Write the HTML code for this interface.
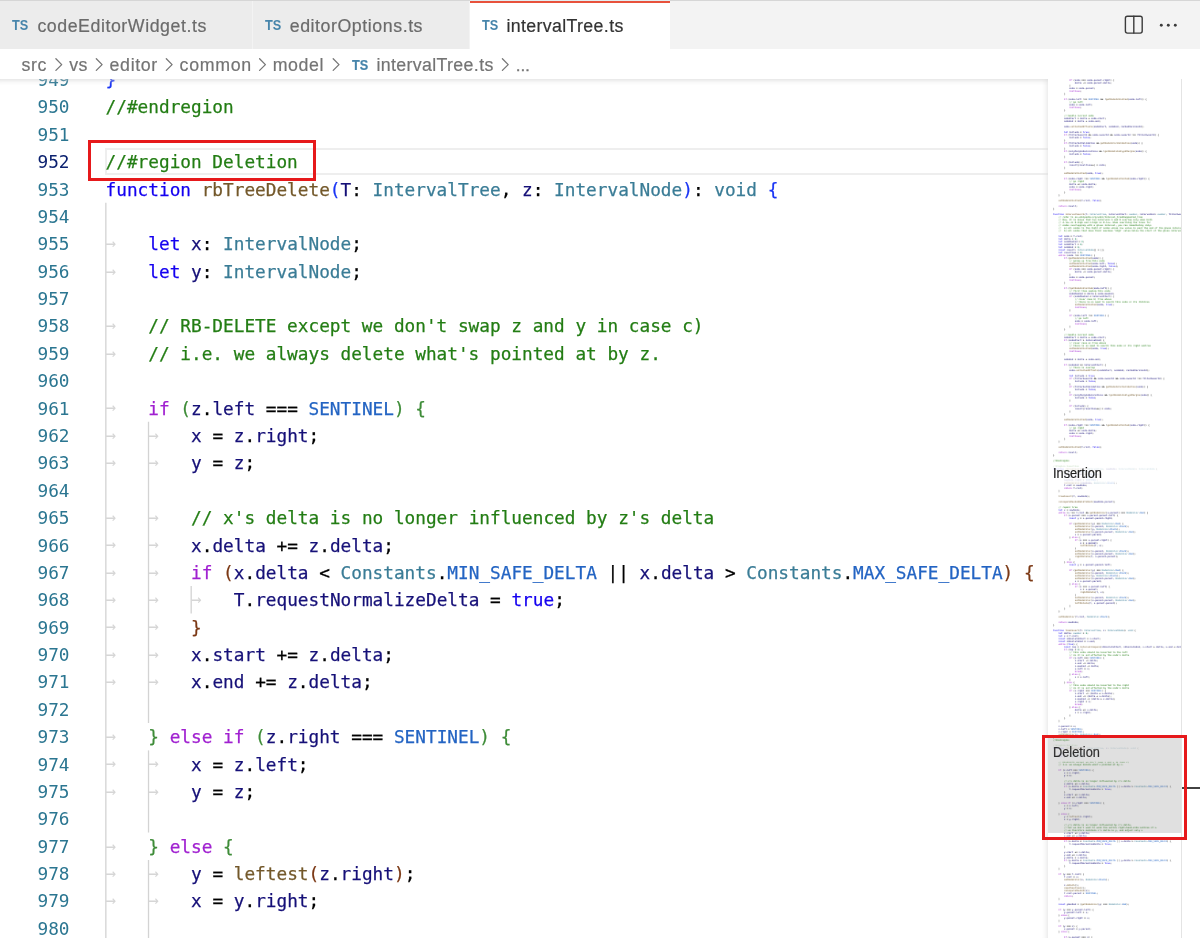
<!DOCTYPE html>
<html lang="en"><head><meta charset="utf-8"><title>intervalTree.ts</title>
<style>
html,body{margin:0;padding:0;background:#fff}
body{width:1200px;height:938px;overflow:hidden;position:relative;font-family:"Liberation Sans", "DejaVu Sans", sans-serif;}
#root{position:absolute;left:0;top:0;width:1200px;height:938px;overflow:hidden;will-change:transform}
i{font-style:normal}
.c{color:#237d14}.k{color:#1400f0}.x{color:#a020d0}.t{color:#3a7c96}.n{color:#2364c3}
.f{color:#73582a}.v{color:#161078}.d{color:#098658}.s{color:#a31515}
.b1{color:#1a35f5}.b2{color:#3e8c38}.b3{color:#7b3814}
#editor{position:absolute;left:0;top:79px;width:1200px;height:859px;overflow:hidden;background:#fff}
#lines{position:absolute;left:0;top:-79px;width:1200px;height:938px;font-family:"DejaVu Sans Mono", "Liberation Mono", monospace;font-size:17.743px;line-height:27.381px;color:#000;white-space:pre;-webkit-text-stroke:.25px}
.ln{position:absolute;left:0;width:69.5px;text-align:right;height:27.381px;color:#2b7691;padding-top:1.2px;-webkit-text-stroke:0}
.ln.cur{color:#0b216f}
.cl{position:absolute;left:105.6px;height:27.381px;padding-top:1.2px}
.ar{position:absolute;top:0;font-weight:normal;-webkit-text-stroke:0;color:#d6d6d6;width:10.682px;text-align:left}
.g{position:absolute;width:1.3px;background:#d6d6d6}
#curline{position:absolute;left:105.00px;top:148.0px;width:943.00px;height:27.381px;box-sizing:border-box;border:2.5px solid #eeeeee;border-right:none}
#tabs{position:absolute;left:0;top:0;width:1200px;height:49px;background:#f3f3f3;border-top:1px solid #d6d6d6;box-sizing:border-box}
.tab{position:absolute;top:0;height:48px;background:#ececec;font-size:17.77px;color:#6b6b6b;white-space:pre}
.tab .ts,.bc .ts{position:absolute;font-weight:bold;font-size:14.7px;line-height:16px;color:#4785ab;letter-spacing:0;transform:scaleX(.867);transform-origin:0 50%}
.tab .lb{position:absolute;top:1.4px;line-height:48px;-webkit-text-stroke:.2px}
.tab.act{background:#fff;color:#333}
#bc{position:absolute;left:0;top:49px;width:1200px;height:30px;background:#fff;font-size:17.77px;color:#747474;white-space:pre}
#bc span{position:absolute;top:1.2px;line-height:30px;-webkit-text-stroke:.2px}
#bc span.ts{top:7.8px;line-height:16px}
#mm{position:absolute;left:1048px;top:79px;width:133px;height:859px;overflow:hidden;background:#fff}
#mmwrap{position:absolute;left:5.20px;top:0.07px;width:200px;height:1000px;transform-origin:0 0;transform:scale(0.91270);will-change:transform}
#mmtext{position:absolute;left:0;top:0;margin:0;font-family:"DejaVu Sans Mono", "Liberation Mono", monospace;font-size:2.4872px;line-height:3px;white-space:pre;color:#000;font-weight:bold;opacity:.8}
.mh{position:absolute;left:0;width:133px;background:rgba(255,255,255,.72)}
.mht{-webkit-text-stroke:.2px;position:absolute;left:5.3px;font-size:13.8px;line-height:16px;color:#1f1f1f;white-space:pre;transform:scaleX(.925);transform-origin:0 0}
#slider{position:absolute;left:0;top:658.30px;width:133px;height:95.7px;background:rgba(100,100,100,.2)}
.red{position:absolute;box-sizing:border-box;border:3px solid #e6191b}
</style></head><body>
<div id="root">
<div id="editor">
<div id="lines">
<svg style="position:absolute;left:0;top:0" width="1200" height="960" viewBox="0 0 1200 960" stroke="#d3d3d3" stroke-width="1.3" fill="none">
<line x1="105.85" y1="202.76" x2="105.85" y2="1215.86"/>
<line x1="148.52" y1="421.81" x2="148.52" y2="723.00"/>
<line x1="148.52" y1="750.38" x2="148.52" y2="832.52"/>
<line x1="148.52" y1="859.91" x2="148.52" y2="1215.86"/>
<line x1="191.18" y1="586.10" x2="191.18" y2="613.48"/>
</svg>
<div id="curline"></div>
<div class="ln" style="top:65.86px">949</div>
<div class=cl style="top:65.86px"><span style="margin-left:0.00px"><i class=b1>}</i></span></div>
<div class="ln" style="top:93.24px">950</div>
<div class=cl style="top:93.24px"><span style="margin-left:0.00px"><i class=c>//#endregion</i></span></div>
<div class="ln" style="top:120.62px">951</div>
<div class="ln cur" style="top:148.00px">952</div>
<div class=cl style="top:148.00px"><span style="margin-left:0.00px"><i class=c>//#region Deletion</i></span></div>
<div class="ln" style="top:175.38px">953</div>
<div class=cl style="top:175.38px"><span style="margin-left:0.00px"><i class=k>function </i><i class=f>rbTreeDelete</i><i class=b1>(</i><i class=v>T</i>: <i class=t>IntervalTree</i>, <i class=v>z</i>: <i class=t>IntervalNode</i><i class=b1>)</i>: <i class=t>void </i><i class=b1>{</i></span></div>
<div class="ln" style="top:202.76px">954</div>
<div class="ln" style="top:230.14px">955</div>
<div class=cl style="top:230.14px"><b class=ar style="left:0.00px">→</b><span style="margin-left:42.73px"><i class=k>let </i><i class=v>x</i>: <i class=t>IntervalNode</i>;</span></div>
<div class="ln" style="top:257.52px">956</div>
<div class=cl style="top:257.52px"><b class=ar style="left:0.00px">→</b><span style="margin-left:42.73px"><i class=k>let </i><i class=v>y</i>: <i class=t>IntervalNode</i>;</span></div>
<div class="ln" style="top:284.90px">957</div>
<div class="ln" style="top:312.29px">958</div>
<div class=cl style="top:312.29px"><b class=ar style="left:0.00px">→</b><span style="margin-left:42.73px"><i class=c>// RB-DELETE except we don't swap z and y in case c)</i></span></div>
<div class="ln" style="top:339.67px">959</div>
<div class=cl style="top:339.67px"><b class=ar style="left:0.00px">→</b><span style="margin-left:42.73px"><i class=c>// i.e. we always delete what's pointed at by z.</i></span></div>
<div class="ln" style="top:367.05px">960</div>
<div class="ln" style="top:394.43px">961</div>
<div class=cl style="top:394.43px"><b class=ar style="left:0.00px">→</b><span style="margin-left:42.73px"><i class=x>if </i><i class=b2>(</i><i class=v>z</i>.<i class=v>left </i>=== <i class=n>SENTINEL</i><i class=b2>) {</i></span></div>
<div class="ln" style="top:421.81px">962</div>
<div class=cl style="top:421.81px"><b class=ar style="left:0.00px">→</b><b class=ar style="left:42.73px">→</b><span style="margin-left:85.46px"><i class=v>x </i>= <i class=v>z</i>.<i class=v>right</i>;</span></div>
<div class="ln" style="top:449.19px">963</div>
<div class=cl style="top:449.19px"><b class=ar style="left:0.00px">→</b><b class=ar style="left:42.73px">→</b><span style="margin-left:85.46px"><i class=v>y </i>= <i class=v>z</i>;</span></div>
<div class="ln" style="top:476.57px">964</div>
<div class="ln" style="top:503.95px">965</div>
<div class=cl style="top:503.95px"><b class=ar style="left:0.00px">→</b><b class=ar style="left:42.73px">→</b><span style="margin-left:85.46px"><i class=c>// x's delta is no longer influenced by z's delta</i></span></div>
<div class="ln" style="top:531.33px">966</div>
<div class=cl style="top:531.33px"><b class=ar style="left:0.00px">→</b><b class=ar style="left:42.73px">→</b><span style="margin-left:85.46px"><i class=v>x</i>.<i class=v>delta </i>+= <i class=v>z</i>.<i class=v>delta</i>;</span></div>
<div class="ln" style="top:558.72px">967</div>
<div class=cl style="top:558.72px"><b class=ar style="left:0.00px">→</b><b class=ar style="left:42.73px">→</b><span style="margin-left:85.46px"><i class=x>if </i><i class=b3>(</i><i class=v>x</i>.<i class=v>delta </i>&lt; <i class=t>Constants</i>.<i class=n>MIN_SAFE_DELTA </i>|| <i class=v>x</i>.<i class=v>delta </i>&gt; <i class=t>Constants</i>.<i class=n>MAX_SAFE_DELTA</i><i class=b3>) {</i></span></div>
<div class="ln" style="top:586.10px">968</div>
<div class=cl style="top:586.10px"><b class=ar style="left:0.00px">→</b><b class=ar style="left:42.73px">→</b><b class=ar style="left:85.46px">→</b><span style="margin-left:128.18px"><i class=v>T</i>.<i class=v>requestNormalizeDelta </i>= <i class=k>true</i>;</span></div>
<div class="ln" style="top:613.48px">969</div>
<div class=cl style="top:613.48px"><b class=ar style="left:0.00px">→</b><b class=ar style="left:42.73px">→</b><span style="margin-left:85.46px"><i class=b3>}</i></span></div>
<div class="ln" style="top:640.86px">970</div>
<div class=cl style="top:640.86px"><b class=ar style="left:0.00px">→</b><b class=ar style="left:42.73px">→</b><span style="margin-left:85.46px"><i class=v>x</i>.<i class=v>start </i>+= <i class=v>z</i>.<i class=v>delta</i>;</span></div>
<div class="ln" style="top:668.24px">971</div>
<div class=cl style="top:668.24px"><b class=ar style="left:0.00px">→</b><b class=ar style="left:42.73px">→</b><span style="margin-left:85.46px"><i class=v>x</i>.<i class=v>end </i>+= <i class=v>z</i>.<i class=v>delta</i>;</span></div>
<div class="ln" style="top:695.62px">972</div>
<div class="ln" style="top:723.00px">973</div>
<div class=cl style="top:723.00px"><b class=ar style="left:0.00px">→</b><span style="margin-left:42.73px"><i class=b2>} </i><i class=x>else if </i><i class=b2>(</i><i class=v>z</i>.<i class=v>right </i>=== <i class=n>SENTINEL</i><i class=b2>) {</i></span></div>
<div class="ln" style="top:750.38px">974</div>
<div class=cl style="top:750.38px"><b class=ar style="left:0.00px">→</b><b class=ar style="left:42.73px">→</b><span style="margin-left:85.46px"><i class=v>x </i>= <i class=v>z</i>.<i class=v>left</i>;</span></div>
<div class="ln" style="top:777.76px">975</div>
<div class=cl style="top:777.76px"><b class=ar style="left:0.00px">→</b><b class=ar style="left:42.73px">→</b><span style="margin-left:85.46px"><i class=v>y </i>= <i class=v>z</i>;</span></div>
<div class="ln" style="top:805.14px">976</div>
<div class="ln" style="top:832.52px">977</div>
<div class=cl style="top:832.52px"><b class=ar style="left:0.00px">→</b><span style="margin-left:42.73px"><i class=b2>} </i><i class=x>else </i><i class=b2>{</i></span></div>
<div class="ln" style="top:859.91px">978</div>
<div class=cl style="top:859.91px"><b class=ar style="left:0.00px">→</b><b class=ar style="left:42.73px">→</b><span style="margin-left:85.46px"><i class=v>y </i>= <i class=f>leftest</i><i class=b3>(</i><i class=v>z</i>.<i class=v>right</i><i class=b3>)</i>;</span></div>
<div class="ln" style="top:887.29px">979</div>
<div class=cl style="top:887.29px"><b class=ar style="left:0.00px">→</b><b class=ar style="left:42.73px">→</b><span style="margin-left:85.46px"><i class=v>x </i>= <i class=v>y</i>.<i class=v>right</i>;</span></div>
<div class="ln" style="top:914.67px">980</div>
<div class="ln" style="top:942.05px">981</div>
<div class=cl style="top:942.05px"><b class=ar style="left:0.00px">→</b><b class=ar style="left:42.73px">→</b><span style="margin-left:85.46px"><i class=c>// y's delta is no longer influenced by z's delta,</i></span></div>
</div>
<div id="topshadow" style="position:absolute;left:0;top:0;width:1181px;height:6px;box-shadow:inset 0 6px 6px -6px #cfcfcf"></div>
</div>
<div id="mm">
<div id="mmwrap"><pre id="mmtext">            <i class=x>if </i>(<i class=v>node </i>=== <i class=v>node</i>.<i class=v>parent</i>.<i class=v>right</i>) {
                <i class=v>delta </i>-= <i class=v>node</i>.<i class=v>parent</i>.<i class=v>delta</i>;
            }
            <i class=v>node </i>= <i class=v>node</i>.<i class=v>parent</i>;
            <i class=x>continue</i>;
        }

        <i class=x>if </i>(<i class=v>node</i>.<i class=v>left </i>!== <i class=n>SENTINEL </i>&amp;&amp; !<i class=f>getNodeIsVisited</i>(<i class=v>node</i>.<i class=v>left</i>)) {
            <i class=c>// go left</i>
            <i class=v>node </i>= <i class=v>node</i>.<i class=v>left</i>;
            <i class=x>continue</i>;
        }

        <i class=c>// handle current node</i>
        <i class=v>nodeStart </i>= <i class=v>delta </i>+ <i class=v>node</i>.<i class=v>start</i>;
        <i class=v>nodeEnd </i>= <i class=v>delta </i>+ <i class=v>node</i>.<i class=v>end</i>;

        <i class=v>node</i>.<i class=f>setCachedOffsets</i>(<i class=v>nodeStart</i>, <i class=v>nodeEnd</i>, <i class=v>cachedVersionId</i>);

        <i class=k>let </i><i class=v>include </i>= <i class=k>true</i>;
        <i class=x>if </i>(<i class=v>filterOwnerId </i>&amp;&amp; <i class=v>node</i>.<i class=v>ownerId </i>&amp;&amp; <i class=v>node</i>.<i class=v>ownerId </i>!== <i class=v>filterOwnerId</i>) {
            <i class=v>include </i>= <i class=k>false</i>;
        }
        <i class=x>if </i>(<i class=v>filterOutValidation </i>&amp;&amp; <i class=f>getNodeIsForValidation</i>(<i class=v>node</i>)) {
            <i class=v>include </i>= <i class=k>false</i>;
        }
        <i class=x>if </i>(<i class=v>onlyMarginDecorations </i>&amp;&amp; !<i class=f>getNodeIsInGlyphMargin</i>(<i class=v>node</i>)) {
            <i class=v>include </i>= <i class=k>false</i>;
        }

        <i class=x>if </i>(<i class=v>include</i>) {
            <i class=v>result</i>[<i class=v>resultLen</i>++] = <i class=v>node</i>;
        }

        <i class=f>setNodeIsVisited</i>(<i class=v>node</i>, <i class=k>true</i>);

        <i class=x>if </i>(<i class=v>node</i>.<i class=v>right </i>!== <i class=n>SENTINEL </i>&amp;&amp; !<i class=f>getNodeIsVisited</i>(<i class=v>node</i>.<i class=v>right</i>)) {
            <i class=c>// go right</i>
            <i class=v>delta </i>+= <i class=v>node</i>.<i class=v>delta</i>;
            <i class=v>node </i>= <i class=v>node</i>.<i class=v>right</i>;
            <i class=x>continue</i>;
        }
    }

    <i class=f>setNodeIsVisited</i>(<i class=v>T</i>.<i class=v>root</i>, <i class=k>false</i>);

    <i class=x>return </i><i class=v>result</i>;
}

<i class=k>function </i><i class=f>intervalSearch</i>(<i class=v>T</i>: <i class=t>IntervalTree</i>, <i class=v>intervalStart</i>: <i class=t>number</i>, <i class=v>intervalEnd</i>: <i class=t>number</i>, <i class=v>filterOwnerId</i>: <i class=t>number</i>, <i class=v>filterOutValidation</i>: <i class=t>boolean</i>, <i class=v>cachedVersionId</i>: <i class=t>number</i>, <i class=v>onlyMarginDecorations</i>: <i class=t>boolean</i>): <i class=t>IntervalNode</i>[] {
    <i class=c>// refer to en.wikipedia.org/wiki/Interval_tree#Augmented_tree</i>
    <i class=c>// Now, it is known that two intervals A and B overlap only when both</i>
    <i class=c>// A.low &lt;= B.high and A.high &gt;= B.low. When searching the trees for</i>
    <i class=c>// nodes overlapping with a given interval, you can immediately skip:</i>
    <i class=c>//  a) all nodes to the right of nodes whose low value is past the end of the given interval.</i>
    <i class=c>//  b) all nodes that have their maximum 'high' value below the start of the given interval.</i>

    <i class=k>let </i><i class=v>node </i>= <i class=v>T</i>.<i class=v>root</i>;
    <i class=k>let </i><i class=v>delta </i>= <i class=d>0</i>;
    <i class=k>let </i><i class=v>nodeMaxEnd </i>= <i class=d>0</i>;
    <i class=k>let </i><i class=v>nodeStart </i>= <i class=d>0</i>;
    <i class=k>let </i><i class=v>nodeEnd </i>= <i class=d>0</i>;
    <i class=k>const </i><i class=v>result</i>: <i class=t>IntervalNode</i>[] = [];
    <i class=k>let </i><i class=v>resultLen </i>= <i class=d>0</i>;
    <i class=x>while </i>(<i class=v>node </i>!== <i class=n>SENTINEL</i>) {
        <i class=x>if </i>(<i class=f>getNodeIsVisited</i>(<i class=v>node</i>)) {
            <i class=c>// going up from this node</i>
            <i class=f>setNodeIsVisited</i>(<i class=v>node</i>.<i class=v>left</i>, <i class=k>false</i>);
            <i class=f>setNodeIsVisited</i>(<i class=v>node</i>.<i class=v>right</i>, <i class=k>false</i>);
            <i class=x>if </i>(<i class=v>node </i>=== <i class=v>node</i>.<i class=v>parent</i>.<i class=v>right</i>) {
                <i class=v>delta </i>-= <i class=v>node</i>.<i class=v>parent</i>.<i class=v>delta</i>;
            }
            <i class=v>node </i>= <i class=v>node</i>.<i class=v>parent</i>;
            <i class=x>continue</i>;
        }

        <i class=x>if </i>(!<i class=f>getNodeIsVisited</i>(<i class=v>node</i>.<i class=v>left</i>)) {
            <i class=c>// first time seeing this node</i>
            <i class=v>nodeMaxEnd </i>= <i class=v>delta </i>+ <i class=v>node</i>.<i class=v>maxEnd</i>;
            <i class=x>if </i>(<i class=v>nodeMaxEnd </i>&lt; <i class=v>intervalStart</i>) {
                <i class=c>// cover case b) from above</i>
                <i class=c>// there is no need to search this node or its children</i>
                <i class=f>setNodeIsVisited</i>(<i class=v>node</i>, <i class=k>true</i>);
                <i class=x>continue</i>;
            }

            <i class=x>if </i>(<i class=v>node</i>.<i class=v>left </i>!== <i class=n>SENTINEL</i>) {
                <i class=c>// go left</i>
                <i class=v>node </i>= <i class=v>node</i>.<i class=v>left</i>;
                <i class=x>continue</i>;
            }
        }

        <i class=c>// handle current node</i>
        <i class=v>nodeStart </i>= <i class=v>delta </i>+ <i class=v>node</i>.<i class=v>start</i>;
        <i class=x>if </i>(<i class=v>nodeStart </i>&gt; <i class=v>intervalEnd</i>) {
            <i class=c>// cover case a) from above</i>
            <i class=c>// there is no need to search this node or its right subtree</i>
            <i class=f>setNodeIsVisited</i>(<i class=v>node</i>, <i class=k>true</i>);
            <i class=x>continue</i>;
        }

        <i class=v>nodeEnd </i>= <i class=v>delta </i>+ <i class=v>node</i>.<i class=v>end</i>;

        <i class=x>if </i>(<i class=v>nodeEnd </i>&gt;= <i class=v>intervalStart</i>) {
            <i class=c>// There is overlap</i>
            <i class=v>node</i>.<i class=f>setCachedOffsets</i>(<i class=v>nodeStart</i>, <i class=v>nodeEnd</i>, <i class=v>cachedVersionId</i>);

            <i class=k>let </i><i class=v>include </i>= <i class=k>true</i>;
            <i class=x>if </i>(<i class=v>filterOwnerId </i>&amp;&amp; <i class=v>node</i>.<i class=v>ownerId </i>&amp;&amp; <i class=v>node</i>.<i class=v>ownerId </i>!== <i class=v>filterOwnerId</i>) {
                <i class=v>include </i>= <i class=k>false</i>;
            }
            <i class=x>if </i>(<i class=v>filterOutValidation </i>&amp;&amp; <i class=f>getNodeIsForValidation</i>(<i class=v>node</i>)) {
                <i class=v>include </i>= <i class=k>false</i>;
            }
            <i class=x>if </i>(<i class=v>onlyMarginDecorations </i>&amp;&amp; !<i class=f>getNodeIsInGlyphMargin</i>(<i class=v>node</i>)) {
                <i class=v>include </i>= <i class=k>false</i>;
            }

            <i class=x>if </i>(<i class=v>include</i>) {
                <i class=v>result</i>[<i class=v>resultLen</i>++] = <i class=v>node</i>;
            }
        }

        <i class=f>setNodeIsVisited</i>(<i class=v>node</i>, <i class=k>true</i>);

        <i class=x>if </i>(<i class=v>node</i>.<i class=v>right </i>!== <i class=n>SENTINEL </i>&amp;&amp; !<i class=f>getNodeIsVisited</i>(<i class=v>node</i>.<i class=v>right</i>)) {
            <i class=c>// go right</i>
            <i class=v>delta </i>+= <i class=v>node</i>.<i class=v>delta</i>;
            <i class=v>node </i>= <i class=v>node</i>.<i class=v>right</i>;
            <i class=x>continue</i>;
        }
    }

    <i class=f>setNodeIsVisited</i>(<i class=v>T</i>.<i class=v>root</i>, <i class=k>false</i>);

    <i class=x>return </i><i class=v>result</i>;
}

<i class=c>//#endregion</i>

<i class=c>//#region Insertion</i>
<i class=k>function </i><i class=f>rbTreeInsert</i>(<i class=v>T</i>: <i class=t>IntervalTree</i>, <i class=v>newNode</i>: <i class=t>IntervalNode</i>): <i class=t>IntervalNode </i>{
    <i class=x>if </i>(<i class=v>T</i>.<i class=v>root </i>=== <i class=n>SENTINEL</i>) {
        <i class=v>newNode</i>.<i class=v>parent </i>= <i class=n>SENTINEL</i>;
        <i class=v>newNode</i>.<i class=v>left </i>= <i class=n>SENTINEL</i>;
        <i class=v>newNode</i>.<i class=v>right </i>= <i class=n>SENTINEL</i>;
        <i class=f>setNodeColor</i>(<i class=v>newNode</i>, <i class=t>NodeColor</i>.<i class=n>Black</i>);
        <i class=v>T</i>.<i class=v>root </i>= <i class=v>newNode</i>;
        <i class=x>return </i><i class=v>T</i>.<i class=v>root</i>;
    }

    <i class=f>treeInsert</i>(<i class=v>T</i>, <i class=v>newNode</i>);

    <i class=f>recomputeMaxEndWalkToRoot</i>(<i class=v>newNode</i>.<i class=v>parent</i>);

    <i class=c>// repair tree</i>
    <i class=k>let </i><i class=v>x </i>= <i class=v>newNode</i>;
    <i class=x>while </i>(<i class=v>x </i>!== <i class=v>T</i>.<i class=v>root </i>&amp;&amp; <i class=f>getNodeColor</i>(<i class=v>x</i>.<i class=v>parent</i>) === <i class=t>NodeColor</i>.<i class=n>Red</i>) {
        <i class=x>if </i>(<i class=v>x</i>.<i class=v>parent </i>=== <i class=v>x</i>.<i class=v>parent</i>.<i class=v>parent</i>.<i class=v>left</i>) {
            <i class=k>const </i><i class=v>y </i>= <i class=v>x</i>.<i class=v>parent</i>.<i class=v>parent</i>.<i class=v>right</i>;

            <i class=x>if </i>(<i class=f>getNodeColor</i>(<i class=v>y</i>) === <i class=t>NodeColor</i>.<i class=n>Red</i>) {
                <i class=f>setNodeColor</i>(<i class=v>x</i>.<i class=v>parent</i>, <i class=t>NodeColor</i>.<i class=n>Black</i>);
                <i class=f>setNodeColor</i>(<i class=v>y</i>, <i class=t>NodeColor</i>.<i class=n>Black</i>);
                <i class=f>setNodeColor</i>(<i class=v>x</i>.<i class=v>parent</i>.<i class=v>parent</i>, <i class=t>NodeColor</i>.<i class=n>Red</i>);
                <i class=v>x </i>= <i class=v>x</i>.<i class=v>parent</i>.<i class=v>parent</i>;
            } <i class=x>else </i>{
                <i class=x>if </i>(<i class=v>x </i>=== <i class=v>x</i>.<i class=v>parent</i>.<i class=v>right</i>) {
                    <i class=v>x </i>= <i class=v>x</i>.<i class=v>parent</i>;
                    <i class=f>leftRotate</i>(<i class=v>T</i>, <i class=v>x</i>);
                }
                <i class=f>setNodeColor</i>(<i class=v>x</i>.<i class=v>parent</i>, <i class=t>NodeColor</i>.<i class=n>Black</i>);
                <i class=f>setNodeColor</i>(<i class=v>x</i>.<i class=v>parent</i>.<i class=v>parent</i>, <i class=t>NodeColor</i>.<i class=n>Red</i>);
                <i class=f>rightRotate</i>(<i class=v>T</i>, <i class=v>x</i>.<i class=v>parent</i>.<i class=v>parent</i>);
            }
        } <i class=x>else </i>{
            <i class=k>const </i><i class=v>y </i>= <i class=v>x</i>.<i class=v>parent</i>.<i class=v>parent</i>.<i class=v>left</i>;

            <i class=x>if </i>(<i class=f>getNodeColor</i>(<i class=v>y</i>) === <i class=t>NodeColor</i>.<i class=n>Red</i>) {
                <i class=f>setNodeColor</i>(<i class=v>x</i>.<i class=v>parent</i>, <i class=t>NodeColor</i>.<i class=n>Black</i>);
                <i class=f>setNodeColor</i>(<i class=v>y</i>, <i class=t>NodeColor</i>.<i class=n>Black</i>);
                <i class=f>setNodeColor</i>(<i class=v>x</i>.<i class=v>parent</i>.<i class=v>parent</i>, <i class=t>NodeColor</i>.<i class=n>Red</i>);
                <i class=v>x </i>= <i class=v>x</i>.<i class=v>parent</i>.<i class=v>parent</i>;
            } <i class=x>else </i>{
                <i class=x>if </i>(<i class=v>x </i>=== <i class=v>x</i>.<i class=v>parent</i>.<i class=v>left</i>) {
                    <i class=v>x </i>= <i class=v>x</i>.<i class=v>parent</i>;
                    <i class=f>rightRotate</i>(<i class=v>T</i>, <i class=v>x</i>);
                }
                <i class=f>setNodeColor</i>(<i class=v>x</i>.<i class=v>parent</i>, <i class=t>NodeColor</i>.<i class=n>Black</i>);
                <i class=f>setNodeColor</i>(<i class=v>x</i>.<i class=v>parent</i>.<i class=v>parent</i>, <i class=t>NodeColor</i>.<i class=n>Red</i>);
                <i class=f>leftRotate</i>(<i class=v>T</i>, <i class=v>x</i>.<i class=v>parent</i>.<i class=v>parent</i>);
            }
        }
    }

    <i class=f>setNodeColor</i>(<i class=v>T</i>.<i class=v>root</i>, <i class=t>NodeColor</i>.<i class=n>Black</i>);

    <i class=x>return </i><i class=v>newNode</i>;
}

<i class=k>function </i><i class=f>treeInsert</i>(<i class=v>T</i>: <i class=t>IntervalTree</i>, <i class=v>z</i>: <i class=t>IntervalNode</i>): <i class=t>void </i>{
    <i class=k>let </i><i class=v>delta</i>: <i class=t>number </i>= <i class=d>0</i>;
    <i class=k>let </i><i class=v>x </i>= <i class=v>T</i>.<i class=v>root</i>;
    <i class=k>const </i><i class=v>zAbsoluteStart </i>= <i class=v>z</i>.<i class=v>start</i>;
    <i class=k>const </i><i class=v>zAbsoluteEnd </i>= <i class=v>z</i>.<i class=v>end</i>;
    <i class=x>while </i>(<i class=k>true</i>) {
        <i class=k>const </i><i class=v>cmp </i>= <i class=f>intervalCompare</i>(<i class=v>zAbsoluteStart</i>, <i class=v>zAbsoluteEnd</i>, <i class=v>x</i>.<i class=v>start </i>+ <i class=v>delta</i>, <i class=v>x</i>.<i class=v>end </i>+ <i class=v>delta</i>);
        <i class=x>if </i>(<i class=v>cmp </i>&lt; <i class=d>0</i>) {
            <i class=c>// this node should be inserted to the left</i>
            <i class=c>// =&gt; it is not affected by the node's delta</i>
            <i class=x>if </i>(<i class=v>x</i>.<i class=v>left </i>=== <i class=n>SENTINEL</i>) {
                <i class=v>z</i>.<i class=v>start </i>-= <i class=v>delta</i>;
                <i class=v>z</i>.<i class=v>end </i>-= <i class=v>delta</i>;
                <i class=v>z</i>.<i class=v>maxEnd </i>-= <i class=v>delta</i>;
                <i class=v>x</i>.<i class=v>left </i>= <i class=v>z</i>;
                <i class=x>break</i>;
            } <i class=x>else </i>{
                <i class=v>x </i>= <i class=v>x</i>.<i class=v>left</i>;
            }
        } <i class=x>else </i>{
            <i class=c>// this node should be inserted to the right</i>
            <i class=c>// =&gt; it is not affected by the node's delta</i>
            <i class=x>if </i>(<i class=v>x</i>.<i class=v>right </i>=== <i class=n>SENTINEL</i>) {
                <i class=v>z</i>.<i class=v>start </i>-= (<i class=v>delta </i>+ <i class=v>x</i>.<i class=v>delta</i>);
                <i class=v>z</i>.<i class=v>end </i>-= (<i class=v>delta </i>+ <i class=v>x</i>.<i class=v>delta</i>);
                <i class=v>z</i>.<i class=v>maxEnd </i>-= (<i class=v>delta </i>+ <i class=v>x</i>.<i class=v>delta</i>);
                <i class=v>x</i>.<i class=v>right </i>= <i class=v>z</i>;
                <i class=x>break</i>;
            } <i class=x>else </i>{
                <i class=v>delta </i>+= <i class=v>x</i>.<i class=v>delta</i>;
                <i class=v>x </i>= <i class=v>x</i>.<i class=v>right</i>;
            }
        }
    }

    <i class=v>z</i>.<i class=v>parent </i>= <i class=v>x</i>;
    <i class=v>z</i>.<i class=v>left </i>= <i class=n>SENTINEL</i>;
    <i class=v>z</i>.<i class=v>right </i>= <i class=n>SENTINEL</i>;
    <i class=f>setNodeColor</i>(<i class=v>z</i>, <i class=t>NodeColor</i>.<i class=n>Red</i>);
}
<i class=c>//#endregion</i>

<i class=c>//#region Deletion</i>
<i class=k>function </i><i class=f>rbTreeDelete</i>(<i class=v>T</i>: <i class=t>IntervalTree</i>, <i class=v>z</i>: <i class=t>IntervalNode</i>): <i class=t>void </i>{

    <i class=k>let </i><i class=v>x</i>: <i class=t>IntervalNode</i>;
    <i class=k>let </i><i class=v>y</i>: <i class=t>IntervalNode</i>;

    <i class=c>// RB-DELETE except we don't swap z and y in case c)</i>
    <i class=c>// i.e. we always delete what's pointed at by z.</i>

    <i class=x>if </i>(<i class=v>z</i>.<i class=v>left </i>=== <i class=n>SENTINEL</i>) {
        <i class=v>x </i>= <i class=v>z</i>.<i class=v>right</i>;
        <i class=v>y </i>= <i class=v>z</i>;

        <i class=c>// x's delta is no longer influenced by z's delta</i>
        <i class=v>x</i>.<i class=v>delta </i>+= <i class=v>z</i>.<i class=v>delta</i>;
        <i class=x>if </i>(<i class=v>x</i>.<i class=v>delta </i>&lt; <i class=t>Constants</i>.<i class=n>MIN_SAFE_DELTA </i>|| <i class=v>x</i>.<i class=v>delta </i>&gt; <i class=t>Constants</i>.<i class=n>MAX_SAFE_DELTA</i>) {
            <i class=v>T</i>.<i class=v>requestNormalizeDelta </i>= <i class=k>true</i>;
        }
        <i class=v>x</i>.<i class=v>start </i>+= <i class=v>z</i>.<i class=v>delta</i>;
        <i class=v>x</i>.<i class=v>end </i>+= <i class=v>z</i>.<i class=v>delta</i>;

    } <i class=x>else if </i>(<i class=v>z</i>.<i class=v>right </i>=== <i class=n>SENTINEL</i>) {
        <i class=v>x </i>= <i class=v>z</i>.<i class=v>left</i>;
        <i class=v>y </i>= <i class=v>z</i>;

    } <i class=x>else </i>{
        <i class=v>y </i>= <i class=f>leftest</i>(<i class=v>z</i>.<i class=v>right</i>);
        <i class=v>x </i>= <i class=v>y</i>.<i class=v>right</i>;

        <i class=c>// y's delta is no longer influenced by z's delta,</i>
        <i class=c>// but we don't want to walk the entire right-hand-side subtree of x.</i>
        <i class=c>// we therefore maintain z's delta in y, and adjust only x</i>
        <i class=v>x</i>.<i class=v>start </i>+= <i class=v>y</i>.<i class=v>delta</i>;
        <i class=v>x</i>.<i class=v>end </i>+= <i class=v>y</i>.<i class=v>delta</i>;
        <i class=v>x</i>.<i class=v>delta </i>+= <i class=v>y</i>.<i class=v>delta</i>;
        <i class=x>if </i>(<i class=v>x</i>.<i class=v>delta </i>&lt; <i class=t>Constants</i>.<i class=n>MIN_SAFE_DELTA </i>|| <i class=v>x</i>.<i class=v>delta </i>&gt; <i class=t>Constants</i>.<i class=n>MAX_SAFE_DELTA</i>) {
            <i class=v>T</i>.<i class=v>requestNormalizeDelta </i>= <i class=k>true</i>;
        }

        <i class=v>y</i>.<i class=v>start </i>+= <i class=v>z</i>.<i class=v>delta</i>;
        <i class=v>y</i>.<i class=v>end </i>+= <i class=v>z</i>.<i class=v>delta</i>;
        <i class=v>y</i>.<i class=v>delta </i>= <i class=v>z</i>.<i class=v>delta</i>;
        <i class=x>if </i>(<i class=v>y</i>.<i class=v>delta </i>&lt; <i class=t>Constants</i>.<i class=n>MIN_SAFE_DELTA </i>|| <i class=v>y</i>.<i class=v>delta </i>&gt; <i class=t>Constants</i>.<i class=n>MAX_SAFE_DELTA</i>) {
            <i class=v>T</i>.<i class=v>requestNormalizeDelta </i>= <i class=k>true</i>;
        }
    }

    <i class=x>if </i>(<i class=v>y </i>=== <i class=v>T</i>.<i class=v>root</i>) {
        <i class=v>T</i>.<i class=v>root </i>= <i class=v>x</i>;
        <i class=f>setNodeColor</i>(<i class=v>x</i>, <i class=t>NodeColor</i>.<i class=n>Black</i>);

        <i class=v>z</i>.<i class=f>detach</i>();
        <i class=f>resetSentinel</i>();
        <i class=f>recomputeMaxEnd</i>(<i class=v>x</i>);
        <i class=v>T</i>.<i class=v>root</i>.<i class=v>parent </i>= <i class=n>SENTINEL</i>;
        <i class=x>return</i>;
    }

    <i class=k>const </i><i class=v>yWasRed </i>= (<i class=f>getNodeColor</i>(<i class=v>y</i>) === <i class=t>NodeColor</i>.<i class=n>Red</i>);

    <i class=x>if </i>(<i class=v>y </i>=== <i class=v>y</i>.<i class=v>parent</i>.<i class=v>left</i>) {
        <i class=v>y</i>.<i class=v>parent</i>.<i class=v>left </i>= <i class=v>x</i>;
    } <i class=x>else </i>{
        <i class=v>y</i>.<i class=v>parent</i>.<i class=v>right </i>= <i class=v>x</i>;
    }

    <i class=x>if </i>(<i class=v>y </i>=== <i class=v>z</i>) {
        <i class=v>x</i>.<i class=v>parent </i>= <i class=v>y</i>.<i class=v>parent</i>;
    } <i class=x>else </i>{

        <i class=x>if </i>(<i class=v>y</i>.<i class=v>parent </i>=== <i class=v>z</i>) {
            <i class=v>x</i>.<i class=v>parent </i>= <i class=v>y</i>;
        } <i class=x>else </i>{
            <i class=v>x</i>.<i class=v>parent </i>= <i class=v>y</i>.<i class=v>parent</i>;
        }

        <i class=v>y</i>.<i class=v>left </i>= <i class=v>z</i>.<i class=v>left</i>;
        <i class=v>y</i>.<i class=v>right </i>= <i class=v>z</i>.<i class=v>right</i>;
        <i class=v>y</i>.<i class=v>parent </i>= <i class=v>z</i>.<i class=v>parent</i>;
        <i class=f>setNodeColor</i>(<i class=v>y</i>, <i class=f>getNodeColor</i>(<i class=v>z</i>));</pre></div>
<div class="mh" style="top:385.70px;height:18.6px"></div><div class="mht" style="top:386.50px">Insertion</div>
<div class="mh" style="top:664.70px;height:18.2px"></div><div class="mht" style="top:665.50px">Deletion</div>
<div id="slider"></div>
</div>
<div id="mmshadow" style="position:absolute;left:1042px;top:79px;width:6px;height:859px;box-shadow:inset -6px 0 6px -6px #dadada"></div>
<div id="ruler" style="position:absolute;left:1181px;top:79px;width:19px;height:859px;background:#fff;border-left:1px solid #e4e4e4;box-sizing:border-box"></div>
<div id="cursormark" style="position:absolute;left:1182px;top:786.6px;width:18px;height:2.7px;background:#424242"></div>
<div id="tabs">
<div class="tab" style="left:0;width:252.1px"><span class="ts" style="left:12.3px;top:15.5px">TS</span><span class="lb" style="left:37.4px;letter-spacing:.55px">codeEditorWidget.ts</span></div>
<div class="tab" style="left:253.1px;width:215.9px"><span class="ts" style="left:11.9px;top:15.5px">TS</span><span class="lb" style="left:36.6px;letter-spacing:.56px">editorOptions.ts</span></div>
<div class="tab act" style="left:469.9px;width:199.8px"><span class="ts" style="left:11.8px;top:15.5px">TS</span><span class="lb" style="left:36.5px;letter-spacing:.36px">intervalTree.ts</span><div style="position:absolute;left:0;top:-1px;width:100%;height:1px;background:#e2eef1"></div><div style="position:absolute;left:0;top:0;width:100%;height:2px;background:#e8523c"></div></div>
</div>
<div id="bc" class="bc">
<span style="left:21.6px;letter-spacing:.6px">src</span><span style="left:69.3px;letter-spacing:.2px">vs</span><span style="left:109.6px;letter-spacing:.65px">editor</span><span style="left:179.6px;letter-spacing:.68px">common</span><span style="left:272.7px;letter-spacing:.6px">model</span><span class="ts" style="left:352.3px;top:7.5px">TS</span><span style="left:376.4px;letter-spacing:.36px">intervalTree.ts</span><span style="left:515.6px;top:1.7px;font-size:14.7px;-webkit-text-stroke:.55px">…</span>
</div>
<svg style="position:absolute;left:0;top:0" width="1200" height="79" viewBox="0 0 1200 79" fill="none" stroke="#777" stroke-width="1.3" stroke-linecap="round" stroke-linejoin="round"><polyline points="55.9,58.8 61.7,64.6 55.9,70.4"/><polyline points="96.3,58.8 102.1,64.6 96.3,70.4"/><polyline points="166.3,58.8 172.1,64.6 166.3,70.4"/><polyline points="259.6,58.8 265.4,64.6 259.6,70.4"/><polyline points="333.2,58.8 339.0,64.6 333.2,70.4"/><polyline points="502.4,58.8 508.2,64.6 502.4,70.4"/><g stroke="#3b3b3b" stroke-width="1.4"><rect x="1125.4" y="16.2" width="16.8" height="16.9" rx="2"/><line x1="1133.8" y1="16.2" x2="1133.8" y2="33.1"/></g><g fill="#3b3b3b" stroke="none"><circle cx="1161.3" cy="25.3" r="1.45"/><circle cx="1168.3" cy="25.3" r="1.45"/><circle cx="1175.3" cy="25.3" r="1.45"/></g></svg>
<div class="red" style="left:88px;top:140px;width:228px;height:40.7px"></div>
<div class="red" style="left:1042px;top:735px;width:145px;height:105px"></div>
</div>
</body></html>
